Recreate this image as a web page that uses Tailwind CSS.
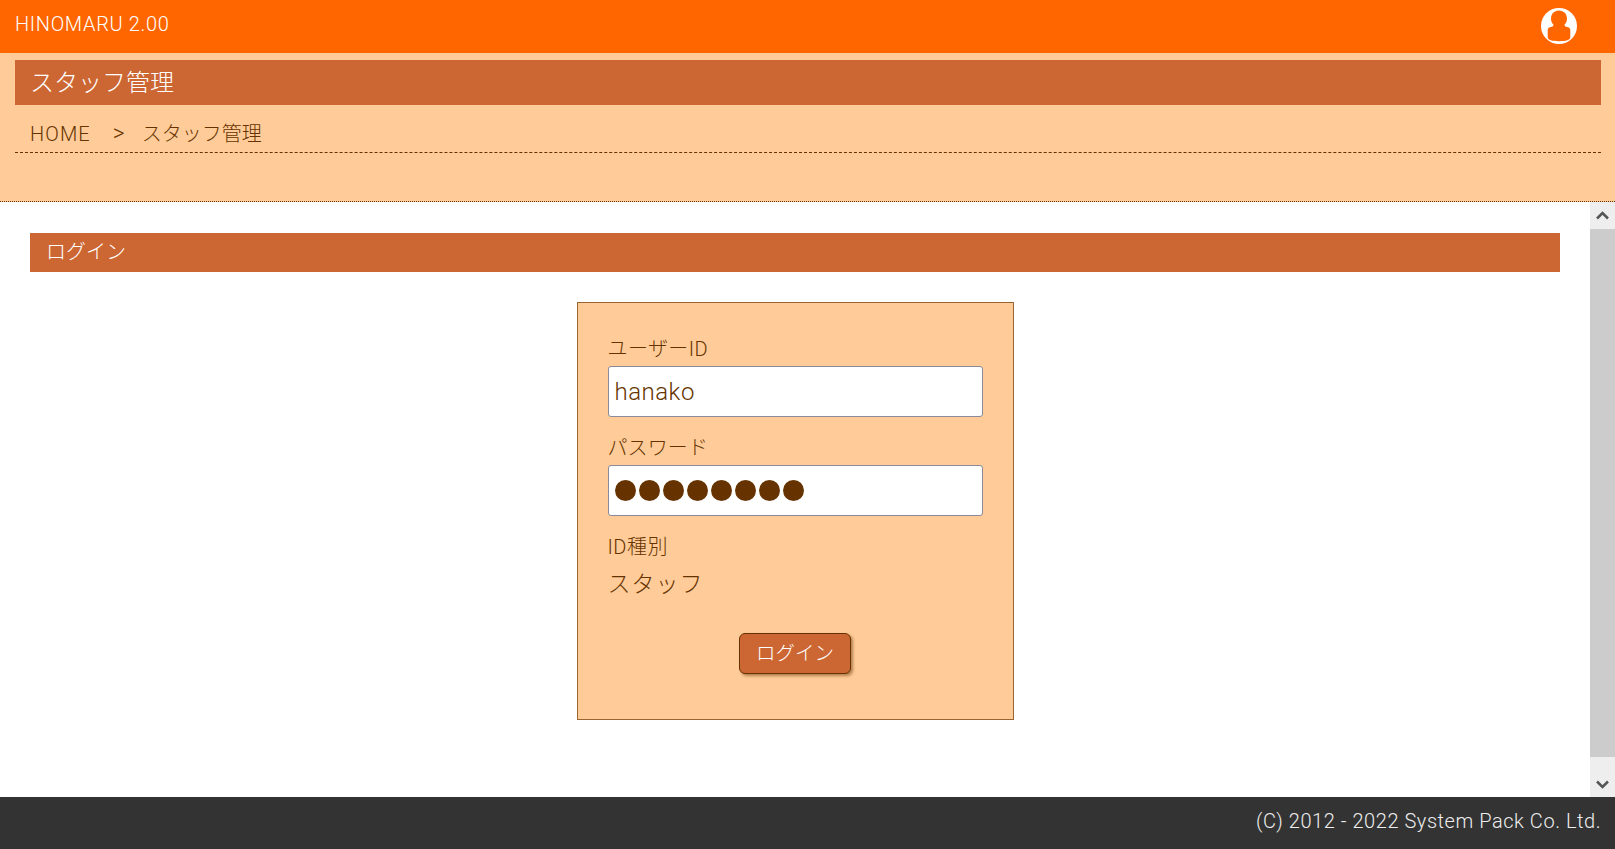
<!DOCTYPE html>
<html lang="ja">
<head>
    <meta charset="UTF-8">
    <title>スタッフ管理</title>
    <script src="https://cdn.jsdelivr.net/npm/@tailwindcss/browser@4"></script>
</head>
<body class="h-[849px] w-[1615px] overflow-hidden flex flex-col bg-white text-[#663300] font-['Roboto','Noto_Sans_CJK_JP',sans-serif] font-light">
    <!-- Header -->
    <header class="h-[53px] shrink-0 bg-[#ff6600] flex items-center justify-between pl-[15px] pr-[41px] text-white">
        <span class="text-[20px] leading-[48px] self-start tracking-[0.65px]">HINOMARU 2.00</span>
        <svg class="w-9 h-9 mt-[-1px] mr-[-3px]" viewBox="0 0 36 36">
            <circle cx="18" cy="18" r="18" fill="#fff"/>
            <path d="M18 2.500c-5 0-8 3.600-8 8.100 0 2.800 1 4.800 2.600 6.200l-.6 1.200c-.6.800-1.500 1-3 1.300-1.300.3-2.300 1.200-2.300 3v7c0 2.800 4.500 3.900 11.300 3.900s11.300-1.100 11.300-3.900v-7c0-1.800-1-2.700-2.300-3-1.500-.3-2.400-.5-3-1.300l-.6-1.200c1.600-1.400 2.600-3.400 2.600-6.200 0-4.500-3-8.100-8-8.100z" fill="#ff6600"/>
        </svg>
    </header>

    <!-- Page title band -->
    <div class="h-[149px] shrink-0 bg-[#ffcc99] border-b border-dotted border-[#663300] pl-[15px] pr-[14px] pt-[7px]">
        <h1 class="h-[45px] bg-[#cc6633] text-white text-[24px] leading-[47px] pl-[15px]">スタッフ管理</h1>
        <nav class="h-[48px] border-b border-dashed border-[#663300] pl-[15px] text-[20px] leading-[57px] whitespace-pre"><span class="tracking-[1.1px]">HOME</span><span class="ml-[22px] mr-[17px] text-[23px]">&gt;</span>スタッフ管理</nav>
    </div>

    <!-- Content -->
    <div class="flex-1 flex min-h-0">
        <main class="flex-1 px-[30px] pt-[31px]">
            <h2 class="h-[39px] bg-[#cc6633] text-white text-[20px] leading-[39px] pl-[16px]">ログイン</h2>
            <div class="mt-[30px] mx-auto w-[437px] h-[418px] bg-[#ffcc99] border border-[#996633] px-[30px] pt-[31px]">
                <label class="block text-[20px] leading-[30px] tracking-[0.4px]">ユーザーID</label>
                <div class="mt-[2px] h-[51px] bg-white border border-[#8a8a9a] rounded-[3px] pl-[6px] text-[24px] leading-[50px] tracking-[0.5px]">hanako</div>
                <label class="block mt-[14px] text-[20px] leading-[34px] tracking-[0.1px]">パスワード</label>
                <div class="h-[51px] bg-white border border-[#8a8a9a] rounded-[3px] pl-[6px] flex items-center gap-[3px]">
                    <span class="w-[21px] h-[21px] rounded-full bg-[#663300]"></span>
                    <span class="w-[21px] h-[21px] rounded-full bg-[#663300]"></span>
                    <span class="w-[21px] h-[21px] rounded-full bg-[#663300]"></span>
                    <span class="w-[21px] h-[21px] rounded-full bg-[#663300]"></span>
                    <span class="w-[21px] h-[21px] rounded-full bg-[#663300]"></span>
                    <span class="w-[21px] h-[21px] rounded-full bg-[#663300]"></span>
                    <span class="w-[21px] h-[21px] rounded-full bg-[#663300]"></span>
                    <span class="w-[21px] h-[21px] rounded-full bg-[#663300]"></span>
                </div>
                <div class="mt-[14px] text-[20px] leading-[34px] tracking-[0.5px]">ID種別</div>
                <div class="mt-[3px] text-[23px] leading-[36px] tracking-[1px]">スタッフ</div>
                <div class="mt-[30px] flex justify-center">
                    <button class="w-[112px] h-[41px] bg-[#cc6633] border border-[#663300] rounded-[6px] text-white text-[19.500px] shadow-[2px_2px_3px_rgba(102,51,0,0.5)]">ログイン</button>
                </div>
            </div>
        </main>

        <!-- Scrollbar -->
        <div class="w-[25px] shrink-0 flex flex-col bg-[#eeeeee]">
            <div class="h-[27px] flex items-center justify-center">
                <svg class="w-[13px] h-[9px]" viewBox="0 0 13 9"><path d="M1 7.500 6.500 2l5.500 5.500" fill="none" stroke="#555" stroke-width="2.500"/></svg>
            </div>
            <div class="flex-1 bg-[#cccccc]"></div>
            <div class="h-[40px] flex items-end justify-center pb-[8px]">
                <svg class="w-[13px] h-[9px]" viewBox="0 0 13 9"><path d="M1 1.500 6.500 7l5.500-5.500" fill="none" stroke="#555" stroke-width="2.500"/></svg>
            </div>
        </div>
    </div>

    <!-- Footer -->
    <footer class="h-[52px] shrink-0 bg-[#333333] text-[#eeeeee] text-right pr-[14px] text-[20px] leading-[49px] tracking-[0.55px]">(C) 2012 - 2022 System Pack Co. Ltd.</footer>
</body>
</html>
